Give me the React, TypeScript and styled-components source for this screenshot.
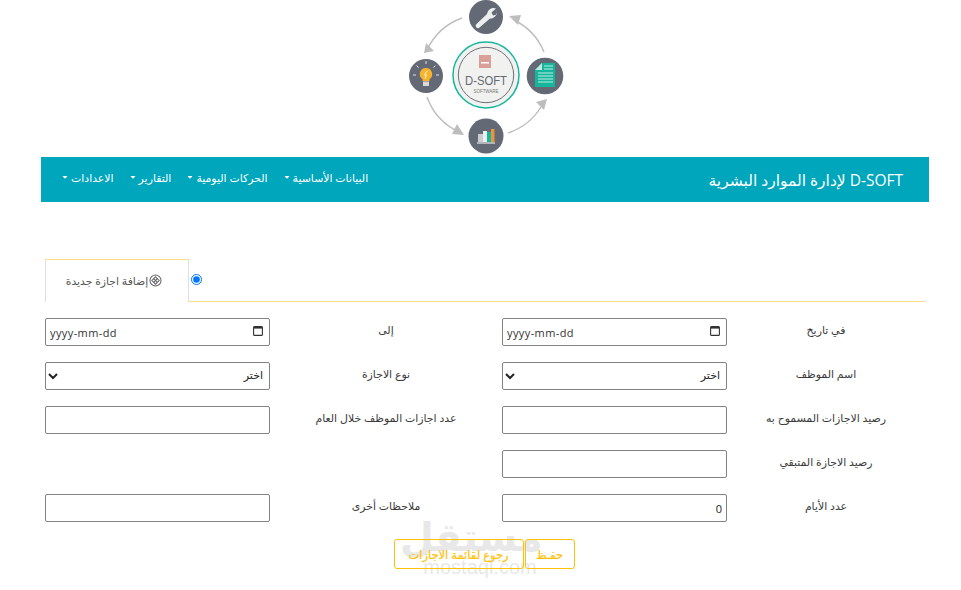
import React from 'react';
import styled, { createGlobalStyle } from 'styled-components';
import { FaCaretDown } from 'react-icons/fa';

const uiFont = '"Open Sans", "DejaVu Sans", sans-serif';

const GlobalStyle = createGlobalStyle`
  html, body {
    margin: 0;
    padding: 0;
    background: #fff;
    font-family: ${uiFont};
  }
`;

const Page = styled.div`
  width: 961px;
  height: 590px;
  overflow: hidden;
  position: relative;
`;

const LogoRow = styled.div`
  height: 157px;
  display: flex;
  justify-content: center;
`;

const Navbar = styled.nav`
  margin: 0 32px 0 41px;
  height: 45px;
  background: #00a6bb;
  display: flex;
  align-items: center;
  justify-content: space-between;
  direction: ltr;
  padding: 0 26px 0 20px;
`;

const Brand = styled.div`
  color: #fff;
  font-size: 15.5px;
  direction: rtl;
`;

const Menu = styled.ul`
  list-style: none;
  margin: 0 0 5px;
  padding: 0;
  display: flex;
  flex-direction: row-reverse;
  gap: 15px;
  color: #fff;
  font-size: 10.9px;
`;

const MenuItem = styled.li`
  display: flex;
  align-items: center;
  gap: 2px;
  direction: rtl;
`;

const Content = styled.main`
  margin: 57px 36px 0 45px;
  direction: rtl;
`;

const Tabs = styled.div`
  height: 42px;
  border-bottom: 1px solid #ffdc85;
  display: flex;
  flex-direction: row-reverse;
  justify-content: flex-end;
  direction: ltr;
`;

const Tab = styled.div`
  order: 2;
  width: 144px;
  height: 43px;
  box-sizing: border-box;
  padding: 0 6px 2px 0;
  border: 1px solid #dfdfdf;
  border-top-color: #ffdc85;
  border-bottom: 0;
  background: #fff;
  display: flex;
  flex-direction: row-reverse;
  justify-content: center;
  align-items: center;
  gap: 1px;
  color: #555;
  font-size: 10.8px;
  direction: rtl;
`;

const TabRadio = styled.input`
  order: 1;
  margin: 15px auto 0 2px;
  width: 11px;
  height: 11px;
`;

const FormGrid = styled.div`
  margin-top: 16px;
  display: grid;
  grid-template-columns: 198px 225px 232px 225px;
  grid-auto-rows: 28px;
  row-gap: 16px;
  align-items: center;
`;

const Label = styled.label`
  text-align: center;
  font-size: 10.9px;
  color: #3a3a3a;
  margin-bottom: 6px;
`;

const Field = styled.input`
  box-sizing: border-box;
  width: 100%;
  height: 28px;
  padding: 1px 4px;
  border: 1px solid #828282;
  border-radius: 2px;
  background: #fff;
  font-family: ${uiFont};
  font-size: 11px;
  color: #222;
  direction: rtl;
`;

const DateBox = styled.div`
  position: relative;
  width: 225px;
  height: 28px;
`;

const DateText = styled(Field)`
  direction: ltr;
  letter-spacing: 0.4px;

  &::placeholder {
    color: #333;
    opacity: 1;
  }
`;

const CalendarMark = styled.svg`
  position: absolute;
  right: 7px;
  top: 8px;
  width: 10px;
  height: 10px;
  pointer-events: none;
`;

const Picker = styled.select`
  box-sizing: border-box;
  width: 225px;
  height: 28px;
  padding: 0 2px 3px 0;
  border: 1px solid #828282;
  border-radius: 2px;
  background: #fff;
  font-family: ${uiFont};
  font-size: 11px;
  color: #222;
  direction: rtl;
`;

const Actions = styled.div`
  margin-top: 17px;
  padding-right: 2px;
  display: flex;
  justify-content: center;
  gap: 1px;
  position: relative;
  z-index: 1;
`;

const GoldButton = styled.button<{ $wide?: boolean }>`
  box-sizing: border-box;
  height: 30px;
  width: ${p => (p.$wide ? '130px' : '50px')};
  padding: 0;
  border: 1px solid #ffc107;
  border-radius: 3px;
  background: transparent;
  color: #ffc107;
  font-family: ${uiFont};
  font-size: 11.5px;
  -webkit-text-stroke: 0.2px #ffc107;
`;

const Watermark = styled.div`
  position: absolute;
  left: 400px;
  top: 518px;
  width: 160px;
  text-align: center;
  color: #e8e8e8;
  line-height: 1;
`;

const WatermarkArabic = styled.div`
  font-size: 39px;
  font-weight: 700;
  font-family: "DejaVu Sans", sans-serif;
  height: 39px;
  margin-right: 48px;
`;

const WatermarkLatin = styled.div`
  font-size: 20px;
  font-family: "Liberation Sans", sans-serif;
`;

function Logo () {
  return (
    <svg width="200" height="157" viewBox="0 0 200 157" aria-label="D-SOFT">
      <g fill="none" stroke="#bdbdbd" strokeWidth="1.4">
        <path d="M81 18 A62 62 0 0 0 46 50" />
        <path d="M46 97 A62 62 0 0 0 78 132" />
        <path d="M127 133 A62 62 0 0 0 160 107" />
        <path d="M163 52 A62 62 0 0 0 133 20" />
      </g>
      <g fill="#bdbdbd">
        <path d="M43 53 L53 51 L45 43 Z" />
        <path d="M83 135 L76 124 L71 134 Z" />
        <path d="M166 99 L155 102 L163 110 Z" />
        <path d="M128 16 L137 25 L140 15 Z" />
      </g>
      <circle cx="105" cy="17" r="17" fill="#636a75" />
      <circle cx="164" cy="76" r="18.3" fill="#636a75" />
      <circle cx="105" cy="136" r="17.5" fill="#636a75" />
      <circle cx="45" cy="76" r="17" fill="#636a75" />

      <path d="M95.5 24 L106 14 A6.5 6.5 0 0 1 115 8.5 L110.5 12.5 L112 15.5 L116 14.5 L115.5 10 A6.5 6.5 0 0 1 109 18.5 L98.5 27.5 A2 2 0 0 1 95.5 24 Z" fill="#eceff0" />

      <path d="M161 63 H174 V87 H154 V70 Z" fill="#14b79c" />
      <path d="M161 63 V70 H154 Z" fill="#bfe9e0" />
      <path d="M163 66 h9 M163 69 h9 M157 73 h15 M157 76 h15 M157 79 h15 M157 82 h15" stroke="#d7f1ec" strokeWidth="0.9" />

      <g stroke="#eceff0" strokeWidth="0.9">
        <path d="M45 61 v3 M35.5 65.5 l2 2 M54.5 65.5 l-2 2 M32 75 h3 M55 75 h3" />
      </g>
      <path d="M45 68 a6.2 6.2 0 0 1 3.5 11.3 V81 h-7 v-1.7 a6.2 6.2 0 0 1 3.5 -11.3 Z" fill="#f7b32b" />
      <path d="M46 71 L43.5 75 H45.5 L44 78.5" fill="none" stroke="#fff" strokeWidth="0.9" />
      <rect x="42" y="81.5" width="6" height="4.5" fill="#d9d9d9" />

      <rect x="97" y="134" width="5" height="8" fill="#c9ccd0" />
      <rect x="102" y="131" width="4" height="11" fill="#eeeeee" />
      <rect x="106" y="132" width="4" height="10" fill="#14b79c" />
      <rect x="110" y="129" width="3.5" height="13" fill="#f0923b" />
      <rect x="96" y="142.5" width="18" height="1" fill="#fff" />

      <circle cx="105" cy="75" r="33" fill="#f1f2f0" stroke="#14b79c" strokeWidth="1.5" />
      <circle cx="105" cy="75" r="27.7" fill="none" stroke="#4a4f5a" strokeWidth="0.8" />
      <rect x="98" y="55" width="12" height="13" fill="#d9a09a" />
      <rect x="100" y="62" width="8" height="1.5" fill="#fff" />
      <text x="105" y="85" textAnchor="middle" textLength="42" lengthAdjust="spacingAndGlyphs" fontFamily='"Liberation Sans", sans-serif' fontSize="13" fill="#646972">D-SOFT</text>
      <text x="105" y="93" textAnchor="middle" textLength="25" lengthAdjust="spacingAndGlyphs" fontFamily='"Liberation Sans", sans-serif' fontSize="5" fill="#777">SOFTWARE</text>
    </svg>
  );
}

function TabIcon () {
  return (
    <svg width="13" height="13" viewBox="0 0 16 16" fill="none" stroke="#666" strokeWidth="1.3">
      <circle cx="8" cy="8" r="6.8" />
      <path d="M8 3.5 L12.5 8 L8 12.5 L3.5 8 Z" />
      <path d="M5.7 5.7 L10.3 10.3 M10.3 5.7 L5.7 10.3" />
    </svg>
  );
}

function DateInput () {
  return (
    <DateBox>
      <DateText type="text" placeholder="yyyy-mm-dd" />
      <CalendarMark viewBox="0 0 10 10" fill="none">
        <rect x="0.6" y="0.6" width="8.8" height="8.8" rx="1" stroke="#333" strokeWidth="1.1" />
        <rect x="0.6" y="0.6" width="8.8" height="2" fill="#333" />
      </CalendarMark>
    </DateBox>
  );
}

const menuItems = ['البيانات الأساسية', 'الحركات اليومية', 'التقارير', 'الاعدادات'];

export default function App () {
  return (
    <Page>
      <GlobalStyle />
      <LogoRow><Logo /></LogoRow>
      <Navbar>
        <Menu>
          {menuItems.map((item) => (
            <MenuItem key={item}>
              {item}
              <FaCaretDown size={8} />
            </MenuItem>
          ))}
        </Menu>
        <Brand>D-SOFT لإدارة الموارد البشرية</Brand>
      </Navbar>
      <Content>
        <Tabs>
          <Tab>
            <span>إضافة اجازة جديدة</span>
            <TabIcon />
          </Tab>
          <TabRadio type="radio" defaultChecked />
        </Tabs>
        <FormGrid>
          <Label>في تاريخ</Label>
          <DateInput />
          <Label>إلى</Label>
          <DateInput />

          <Label>اسم الموظف</Label>
          <Picker defaultValue="0"><option value="0">اختر</option></Picker>
          <Label>نوع الاجازة</Label>
          <Picker defaultValue="0"><option value="0">اختر</option></Picker>

          <Label>رصيد الاجازات المسموح به</Label>
          <Field type="text" />
          <Label>عدد اجازات الموظف خلال العام</Label>
          <Field type="text" />

          <Label>رصيد الاجازة المتبقي</Label>
          <Field type="text" />
          <span />
          <span />

          <Label>عدد الأيام</Label>
          <Field type="text" defaultValue="0" />
          <Label>ملاحظات أخرى</Label>
          <Field type="text" />
        </FormGrid>
        <Actions>
          <GoldButton>حفـظ</GoldButton>
          <GoldButton $wide>رجوع لقائمة الاجازات</GoldButton>
        </Actions>
      </Content>
      <Watermark>
        <WatermarkArabic>مستقل</WatermarkArabic>
        <WatermarkLatin>mostaql.com</WatermarkLatin>
      </Watermark>
    </Page>
  );
}
